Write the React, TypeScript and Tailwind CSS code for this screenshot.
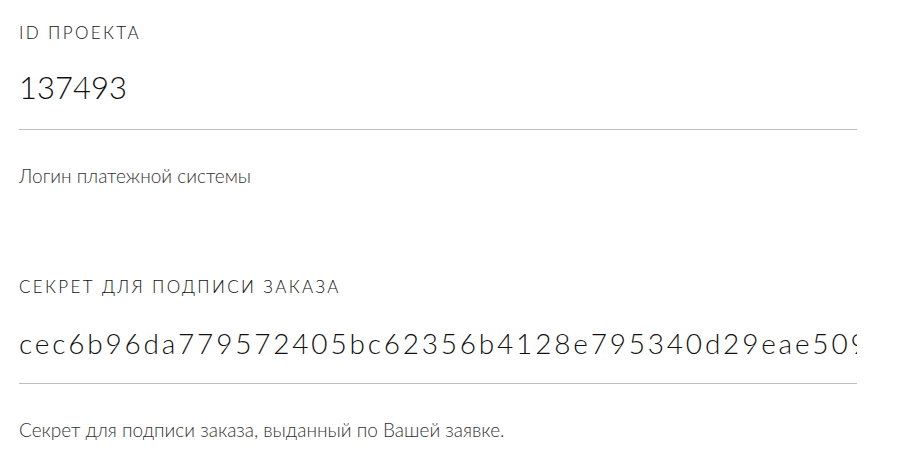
import { useState } from "react";

type FieldProps = {
  label: string;
  value: string;
  hint: string;
  big?: boolean;
};

function Field({ label, value, hint, big }: FieldProps) {
  const [val, setVal] = useState(value);

  return (
    <div className="w-[838px]">
      <label className="block h-[16px] text-[17px] leading-[16px] uppercase tracking-[0.14em] font-light text-[#111]">
        {label}
      </label>
      <div className={big ? "pb-[21px] border-b border-[#bdbdbd]" : "pb-[19px] border-b border-[#bdbdbd]"}>
        <input
          className={
            big
              ? "block w-full mt-[25px] h-[42px] text-[31px] leading-[42px] font-light text-[#111] outline-none bg-transparent"
              : "block w-full mt-[27px] h-[42px] text-[28px] leading-[42px] tracking-[0.1em] font-light text-[#111] outline-none bg-transparent"
          }
          value={val}
          onChange={(e) => setVal(e.target.value)}
        />
      </div>
      <p className="mt-[35px] text-[19px] leading-[22px] font-light text-[#333]">
        {hint}
      </p>
    </div>
  );
}

export default function App() {
  return (
    <div
      className="min-h-screen bg-white pl-[19px] pt-[25px]"
      style={{ fontFamily: "Lato, 'Open Sans', sans-serif" }}
    >
      <div className="flex flex-col gap-[92px]">
        <Field
          label="ID проекта"
          value="137493"
          hint="Логин платежной системы"
          big
        />
        <Field
          label="Секрет для подписи заказа"
          value="cec6b96da779572405bc62356b4128e795340d29eae5091d"
          hint="Секрет для подписи заказа, выданный по Вашей заявке."
        />
      </div>
    </div>
  );
}
